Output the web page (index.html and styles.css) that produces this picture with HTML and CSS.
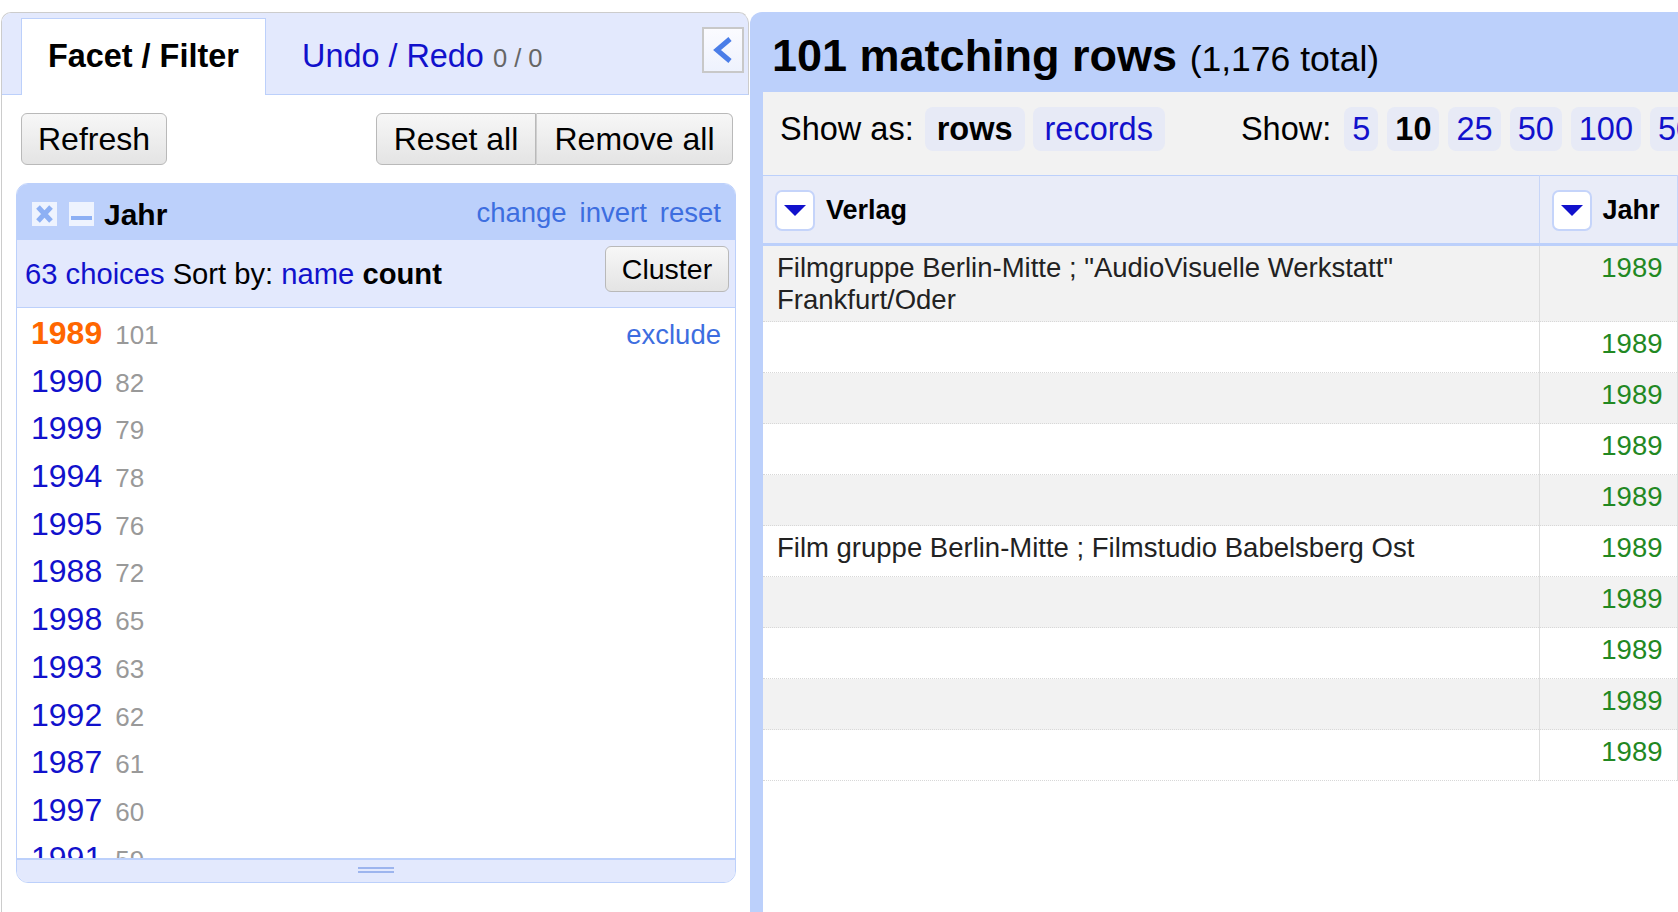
FILE: index.html
```html
<!DOCTYPE html>
<html lang="de">
<head>
<meta charset="utf-8">
<title>OpenRefine</title>
<link rel="stylesheet" href="styles.css">
</head>
<body>
<div class="app">
  <aside class="left-panel">
    <div class="tabs">
      <div class="tab tab-active">Facet / Filter</div>
      <div class="tab tab-undo"><span class="undo-link">Undo / Redo</span> <span class="undo-count">0 / 0</span></div>
      <button class="collapse-btn" aria-label="collapse">
        <svg width="22" height="26" viewBox="0 0 22 26"><polyline points="18,2 5,13 18,24" fill="none" stroke="#4a7de8" stroke-width="5" stroke-linejoin="miter"/></svg>
      </button>
    </div>
    <div class="facet-controls">
      <button class="btn btn-refresh">Refresh</button>
      <div class="btn-group">
        <button class="btn btn-left">Reset all</button><button class="btn btn-right">Remove all</button>
      </div>
    </div>
    <div class="facet">
      <div class="facet-header">
        <span class="facet-icon icon-x">
          <svg width="25" height="24" viewBox="0 0 25 24"><path d="M6 5 L19 19 M19 5 L6 19" stroke="#8db0f4" stroke-width="5" stroke-linecap="butt"/></svg>
        </span>
        <span class="facet-icon icon-min">
          <svg width="25" height="24" viewBox="0 0 25 24"><rect x="2" y="14" width="21" height="4" fill="#8db0f4"/></svg>
        </span>
        <span class="facet-title">Jahr</span>
        <span class="facet-links"><a>change</a><a>invert</a><a>reset</a></span>
      </div>
      <div class="facet-sort">
        <span class="sort-text"><a class="choices">63 choices</a> Sort by: <a class="choices">name</a> <b>count</b></span>
        <button class="btn btn-cluster">Cluster</button>
      </div>
      <div class="facet-list">
        <div class="choice selected"><span class="label">1989</span><span class="count">101</span><a class="exclude">exclude</a></div>
        <div class="choice"><span class="label">1990</span><span class="count">82</span></div>
        <div class="choice"><span class="label">1999</span><span class="count">79</span></div>
        <div class="choice"><span class="label">1994</span><span class="count">78</span></div>
        <div class="choice"><span class="label">1995</span><span class="count">76</span></div>
        <div class="choice"><span class="label">1988</span><span class="count">72</span></div>
        <div class="choice"><span class="label">1998</span><span class="count">65</span></div>
        <div class="choice"><span class="label">1993</span><span class="count">63</span></div>
        <div class="choice"><span class="label">1992</span><span class="count">62</span></div>
        <div class="choice"><span class="label">1987</span><span class="count">61</span></div>
        <div class="choice"><span class="label">1997</span><span class="count">60</span></div>
        <div class="choice"><span class="label">1991</span><span class="count">59</span></div>
      </div>
      <div class="facet-footer"><span class="grip"></span></div>
    </div>
  </aside>
  <main class="right-panel">
    <div class="summary"><b>101 matching rows</b> <span class="total">(1,176 total)</span></div>
    <div class="view">
      <div class="toolbar">
        <span class="tb-label">Show as:</span>
        <span class="pill pill-active">rows</span>
        <span class="pill">records</span>
        <span class="tb-label tb-show">Show:</span>
        <span class="pill pill-num">5</span>
        <span class="pill pill-num pill-active">10</span>
        <span class="pill pill-num">25</span>
        <span class="pill pill-num">50</span>
        <span class="pill pill-num">100</span>
        <span class="pill pill-num">500</span>
      </div>
      <table class="data-table">
        <colgroup><col class="col-verlag"><col class="col-jahr"></colgroup>
        <thead>
          <tr>
            <th><span class="th-inner"><span class="dd"><svg width="22" height="11" viewBox="0 0 22 11"><polygon points="0,0 22,0 11,11" fill="#1111cc"/></svg></span>Verlag</span></th>
            <th><span class="th-inner"><span class="dd"><svg width="22" height="11" viewBox="0 0 22 11"><polygon points="0,0 22,0 11,11" fill="#1111cc"/></svg></span>Jahr</span></th>
          </tr>
        </thead>
        <tbody>
          <tr class="odd"><td>Filmgruppe Berlin-Mitte ; "AudioVisuelle Werkstatt" Frankfurt/Oder</td><td class="num">1989</td></tr>
          <tr><td></td><td class="num">1989</td></tr>
          <tr class="odd"><td></td><td class="num">1989</td></tr>
          <tr><td></td><td class="num">1989</td></tr>
          <tr class="odd"><td></td><td class="num">1989</td></tr>
          <tr><td>Film gruppe Berlin-Mitte ; Filmstudio Babelsberg Ost</td><td class="num">1989</td></tr>
          <tr class="odd"><td></td><td class="num">1989</td></tr>
          <tr><td></td><td class="num">1989</td></tr>
          <tr class="odd"><td></td><td class="num">1989</td></tr>
          <tr><td></td><td class="num">1989</td></tr>
        </tbody>
      </table>
    </div>
  </main>
</div>
</body>
</html>
```

FILE: styles.css
```css
* { box-sizing: border-box; }
html, body { margin: 0; padding: 0; }
body {
  font-family: "Liberation Sans", Arial, Helvetica, sans-serif;
  background: #fff;
  color: #000;
  width: 1678px;
  height: 912px;
  overflow: hidden;
}
a { cursor: pointer; }

.app {
  display: flex;
  height: 912px;
  padding-top: 12px;
}

/* ---------- left panel ---------- */
.left-panel {
  width: 748px;
  margin-left: 1px;
  flex: none;
  border: 1px solid #cccccc;
  border-bottom: none;
  border-right-color: transparent;
  border-radius: 10px 10px 0 0;
  display: flex;
  flex-direction: column;
}
.tabs {
  height: 82px;
  background: #e3e9fd;
  border-bottom: 1px solid #bcd0fb;
  border-right: 1px solid #cccccc;
  margin-right: -1px;
  border-radius: 9px 10px 0 0;
  display: flex;
  align-items: flex-start;
  padding-left: 19px;
}
.tab {
  font-size: 32.4px;
  line-height: 37px;
  white-space: nowrap;
}
.tab-active {
  margin-top: 5px;
  height: 77px;
  width: 245px;
  background: #fff;
  border: 1px solid #bcd0fb;
  border-bottom: none;
  padding: 19px 0 0 26px;
  font-weight: bold;
}
.tab-undo {
  margin-top: 25px;
  margin-left: 36px;
}
.undo-link { color: #1111cc; }
.undo-count { color: #666; font-size: 25.5px; }
.collapse-btn {
  margin-left: auto;
  margin-top: 14px;
  margin-right: 4px;
  width: 42px;
  height: 46px;
  padding: 0;
  border: 2px solid #c8c8c8;
  background: linear-gradient(#fbfbff, #eef2fd);
  display: flex;
  align-items: center;
  justify-content: center;
}

.facet-controls {
  display: flex;
  justify-content: space-between;
  padding: 18px 15px 0 19px;
}
.btn {
  font-family: "Liberation Sans", Arial, sans-serif;
  font-size: 32px;
  height: 52px;
  padding: 0 16px;
  color: #000;
  background: linear-gradient(#f7f7f7, #e4e4e4);
  border: 1px solid #b9b9b9;
  border-radius: 6px;
}
.btn-refresh { width: 146px; padding: 0; }
.btn-group { display: flex; }
.btn-left { border-radius: 6px 0 0 6px; padding: 0; width: 160px; }
.btn-right { border-radius: 0 6px 6px 0; border-left: 1px solid #cfcfcf; width: 197px; padding: 0; }

.facet {
  margin: 18px 12px 0 14px;
  height: 700px;
  border: 1px solid #bcd0fb;
  border-radius: 12px;
  overflow: hidden;
  display: flex;
  flex-direction: column;
}
.facet-header {
  height: 56px;
  flex: none;
  background: #bcd0fb;
  display: flex;
  align-items: center;
  padding: 0 14px 0 15px;
}
.facet-icon {
  width: 25px;
  height: 24px;
  background: #eef3fe;
  display: inline-flex;
  margin-right: 12px;
  margin-top: 4px;
}
.icon-min { margin-right: 10px; }
.facet-title {
  font-size: 30px;
  font-weight: bold;
  margin-top: 6px;
}
.facet-links {
  margin-left: auto;
  display: flex;
  gap: 13px;
  font-size: 27.5px;
  margin-top: 1px;
}
.facet-links a { color: #3d6ee0; }

.facet-sort {
  height: 68px;
  flex: none;
  background: #e3e9fd;
  border-bottom: 1px solid #bcd0fb;
  display: flex;
  align-items: flex-start;
  padding: 0 6px 0 8px;
  font-size: 29.2px;
}
.choices { color: #1111cc; }
.sort-text { margin-top: 18px; white-space: nowrap; }
.btn-cluster {
  margin-left: auto;
  margin-top: 6px;
  font-size: 28.5px;
  height: 46px;
  width: 124px;
  padding: 0;
}

.facet-list {
  flex: 1;
  overflow: hidden;
  padding: 2px 14px 0 14px;
  background: #fff;
}
.choice {
  display: flex;
  align-items: baseline;
  height: 47.7px;
  line-height: 47.7px;
  white-space: nowrap;
}
.label { font-size: 32px; color: #1111cc; }
.selected .label { color: #ff6600; font-weight: bold; }
.count { font-size: 26px; color: #999; margin-left: 13px; }
.exclude { margin-left: auto; font-size: 27.5px; color: #3d6ee0; }

.facet-footer {
  height: 24px;
  flex: none;
  background: #e3e9fd;
  border-top: 2px solid #bcd0fb;
  display: flex;
  justify-content: center;
  padding-top: 7px;
}
.grip {
  width: 36px;
  height: 6px;
  border-top: 2px solid #9db5ee;
  border-bottom: 2px solid #9db5ee;
}

/* ---------- right panel ---------- */
.right-panel {
  flex: 1;
  min-width: 0;
  margin-left: 1px;
  background: #bcd0fb;
  border-radius: 12px 0 0 0;
  display: flex;
  flex-direction: column;
  overflow: hidden;
}
.summary {
  height: 80px;
  flex: none;
  padding: 18px 0 0 22px;
  font-size: 45px;
  line-height: 52px;
  white-space: nowrap;
}
.total { font-size: 35.5px; }
.view {
  flex: 1;
  margin-left: 13px;
  background: #fff;
  overflow: hidden;
}
.toolbar {
  height: 83px;
  background: #f2f2f2;
  display: flex;
  align-items: flex-start;
  padding: 15px 0 0 17px;
  gap: 8px;
  font-size: 32.5px;
  white-space: nowrap;
}
.tb-label { line-height: 44px; margin-right: 3px; }
.tb-show { margin-left: 68px; margin-right: 5px; }
.pill {
  height: 44px;
  line-height: 44px;
  padding: 0 12px;
  border-radius: 8px;
  background: #e7eaf6;
  color: #1111cc;
  flex: none;
}
.pill-num { padding: 0 8px; margin-right: 1px; }
.pill-active { color: #000; font-weight: bold; }

.data-table {
  table-layout: fixed;
  border-collapse: collapse;
  width: 914px;
}
.col-verlag { width: 776px; }
.col-jahr { width: 138px; }
.data-table th {
  height: 69px;
  background: #e9ecf8;
  border-top: 1px solid #bcd0fb;
  border-bottom: 3px solid #bcd0fb;
  border-left: 1px solid #c8d6f8;
  border-right: 1px solid #c8d6f8;
  padding: 2px 12px 0 12px;
  text-align: left;
  vertical-align: middle;
  font-size: 27px;
  font-weight: bold;
  white-space: nowrap;
}
.data-table th:first-child { border-left: none; }
.th-inner { display: flex; align-items: center; gap: 11px; }
.dd {
  width: 40px;
  height: 41px;
  flex: none;
  background: #fff;
  border: 2px solid #c5d4fa;
  border-radius: 7px;
  display: inline-flex;
  align-items: center;
  justify-content: center;
}
.data-table td {
  height: 51px;
  padding: 6px 14px 5px 14px;
  line-height: 32px;
  font-size: 27.5px;
  color: #222;
  vertical-align: top;
  border-bottom: 1px dotted #d8d8d8;
  border-left: 1px solid #dddddd;
  border-right: 1px solid #dddddd;
}
.data-table td:first-child { border-left: none; }
.data-table tr.odd td { background: #f2f2f2; }
.data-table td.num { text-align: right; color: #228822; }
```
